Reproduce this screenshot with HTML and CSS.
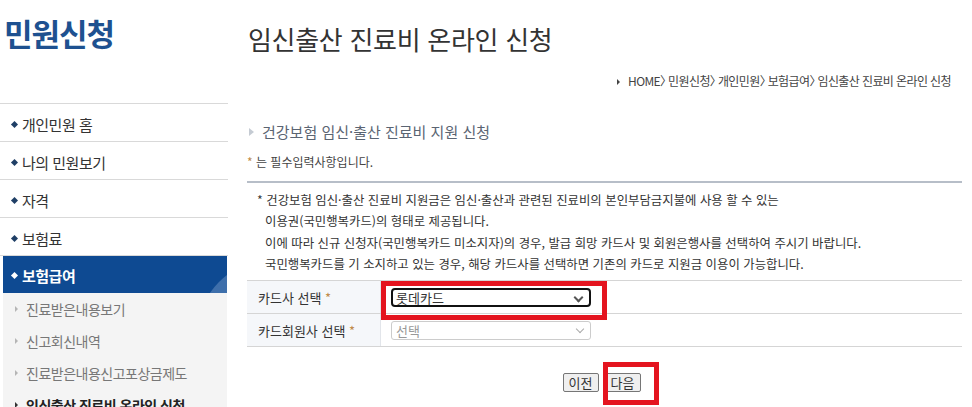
FILE: index.html
```html
<!DOCTYPE html>
<html lang="ko">
<head>
  <meta charset="UTF-8" />
  <title>임신출산 진료비 온라인 신청</title>
  <link rel="stylesheet" href="styles.css">
</head>
<body>
  <div class="page">
    <!-- 왼쪽 메뉴 -->
    <div class="sidebar">
      <h1 class="side-title">민원신청</h1>
      <ul class="side-menu">
        <li><span class="dia"></span>개인민원 홈</li>
        <li><span class="dia"></span>나의 민원보기</li>
        <li><span class="dia"></span>자격</li>
        <li><span class="dia"></span>보험료</li>
        <li class="active"><span class="dia"></span>보험급여</li>
      </ul>
      <ul class="sub-menu">
        <li><span class="tri"></span>진료받은내용보기</li>
        <li><span class="tri"></span>신고회신내역</li>
        <li><span class="tri"></span>진료받은내용신고포상금제도</li>
        <li class="on"><span class="tri"></span>임신출산 진료비 온라인 신청</li>
      </ul>
    </div>

    <!-- 본문 -->
    <div class="main">
      <h2 class="page-title">임신출산 진료비 온라인 신청</h2>
      <div class="location">
        <span class="loc-tri"></span>HOME<span class="gt">〉</span>민원신청<span class="gt">〉</span>개인민원<span class="gt">〉</span>보험급여<span class="gt">〉</span>임신출산 진료비 온라인 신청
      </div>

      <h3 class="sec-title"><span class="sec-tri"></span>건강보험 임신·출산 진료비 지원 신청</h3>
      <p class="req-note"><span class="star">*</span> 는 필수입력사항입니다.</p>

      <div class="notice">
        <p>* 건강보험 임신·출산 진료비 지원금은 임신·출산과 관련된 진료비의 본인부담금지불에 사용 할 수 있는</p>
        <p class="indent">이용권(국민행복카드)의 형태로 제공됩니다.</p>
        <p class="indent">이에 따라 신규 신청자(국민행복카드 미소지자)의 경우, 발급 희망 카드사 및 회원은행사를 선택하여 주시기 바랍니다.</p>
        <p class="indent">국민행복카드를 기 소지하고 있는 경우, 해당 카드사를 선택하면 기존의 카드로 지원금 이용이 가능합니다.</p>
      </div>

      <table class="form-table">
        <tr>
          <th>카드사 선택 <span class="star">*</span></th>
          <td class="mark-cell">
            <div class="fake-select focus">롯데카드<span class="chev"></span></div>
            <div class="red-box box-card"></div>
          </td>
        </tr>
        <tr>
          <th>카드회원사 선택 <span class="star">*</span></th>
          <td>
            <div class="fake-select disabled">선택<span class="chev"></span></div>
          </td>
        </tr>
      </table>

      <div class="btn-area">
        <button class="btn">이전</button>
        <span class="next-wrap">
          <button class="btn">다음</button>
          <span class="red-box box-next"></span>
        </span>
      </div>
    </div>
  </div>
</body>
</html>
```

FILE: styles.css
```css
/* 기본 */
body {
  margin: 0;
  font-family: "Noto Sans CJK KR", "Noto Sans", sans-serif;
  color: #333;
  background: #fff;
  overflow: hidden;
}

ul, p, h1, h2, h3 {
  margin: 0;
  padding: 0;
}

ul { list-style: none; }

.page {
  display: flex;
  height: 407px;
}

/* SIDEBAR */
.sidebar {
  width: 228px;
  flex: none;
}

.side-title {
  height: 104px;
  padding: 11px 0 0 4px;
  box-sizing: border-box;
  border-bottom: 1px solid #d9d9d9;
  font-size: 31px;
  line-height: 44px;
  font-weight: 700;
  color: #1e5190;
  letter-spacing: -1px;
}

.side-menu li {
  height: 37px;
  box-sizing: border-box;
  padding-top: 3px;
  border-bottom: 1px solid #d9d9d9;
  display: flex;
  align-items: center;
  padding-left: 12px;
  font-size: 15px;
  color: #333;
  letter-spacing: -0.5px;
}

.side-menu li:not(.active) {
  height: 38px;
}

.side-menu .dia {
  width: 5px;
  height: 5px;
  background: #1f3f66;
  transform: rotate(45deg);
  margin-right: 5px;
}

.side-menu li.active {
  position: relative;
  height: 37px;
  margin: 0 1px 0 3px;
  padding-left: 9px;
  padding-top: 1px;
  border-bottom: none;
  background: #0e4a92;
  color: #fff;
  font-weight: 700;
  overflow: hidden;
}

.side-menu li.active .dia {
  background: #fff;
}

/* 오른쪽 곡선 장식 */
.side-menu li.active::after {
  content: "";
  position: absolute;
  right: -120px;
  top: 4px;
  width: 150px;
  height: 150px;
  border-radius: 50%;
  background: #3e6fab;
}

.sub-menu {
  margin: 0 1px 0 3px;
  background: #f4f4f4;
  height: 120px;
}

.sub-menu li {
  height: 32px;
  display: flex;
  align-items: center;
  padding-left: 12px;
  font-size: 14px;
  color: #777;
  letter-spacing: -0.5px;
}

.sub-menu .tri {
  width: 0;
  height: 0;
  border-left: 3px solid #b5b5b5;
  border-top: 3px solid transparent;
  border-bottom: 3px solid transparent;
  margin-right: 8px;
}

.sub-menu li.on {
  color: #222;
  font-weight: 700;
}

.sub-menu li.on .tri {
  border-left-color: #333;
}

/* MAIN */
.main {
  flex: 1;
  padding: 0 10px 0 19px;
}

.page-title {
  font-size: 26px;
  font-weight: 400;
  color: #333;
  line-height: 36px;
  padding: 21px 0 0 1px;
  letter-spacing: -0.3px;
}

.location {
  text-align: right;
  font-size: 12px;
  color: #444;
  letter-spacing: -0.6px;
  margin-top: 16px;
  padding-right: 11px;
  line-height: 16px;
}

.location .gt {
  margin-right: 2px;
  letter-spacing: -6px;
}

.loc-tri {
  display: inline-block;
  width: 0;
  height: 0;
  border-left: 3px solid #444;
  border-top: 3px solid transparent;
  border-bottom: 3px solid transparent;
  margin-right: 8px;
  vertical-align: 1px;
}

.sec-title {
  margin-top: 33px;
  font-size: 15px;
  font-weight: 400;
  color: #5a6472;
  line-height: 20px;
  padding-left: 2px;
  display: flex;
  align-items: center;
}

.sec-tri {
  width: 0;
  height: 0;
  border-left: 5px solid #c5cbd3;
  border-top: 4px solid transparent;
  border-bottom: 4px solid transparent;
  margin-right: 8px;
}

.req-note {
  margin-top: 12px;
  font-size: 12px;
  line-height: 16px;
  color: #444;
}

.star {
  color: #c08a4a;
}

.notice {
  margin-top: 11px;
  border-top: 2px solid #b7bec8;
  border-bottom: 1px solid #d5d5d5;
  padding: 7px 0 5px 10px;
  font-size: 12.4px;
  line-height: 21.3px;
  color: #333;
}

.notice .indent {
  padding-left: 8px;
}

/* FORM TABLE */
.form-table {
  width: 100%;
  border-collapse: collapse;
}

.form-table th,
.form-table td {
  height: 32px;
  border-bottom: 1px solid #d5d5d5;
  padding: 0;
}

.form-table th {
  width: 122px;
  background: #f5f7fa;
  text-align: left;
  padding-left: 11px;
  font-size: 13px;
  font-weight: 400;
  color: #333;
  border-right: 1px solid #e2e5ea;
}

.form-table td {
  padding-left: 10px;
}

.mark-cell {
  position: relative;
}

.fake-select {
  position: relative;
  width: 200px;
  height: 19px;
  box-sizing: border-box;
  border: 1px solid #ccc;
  border-radius: 3px;
  font-size: 13px;
  line-height: 17px;
  padding-left: 4px;
  color: #999;
}

.fake-select.focus {
  border: 2px solid #111;
  border-radius: 4px;
  color: #333;
  line-height: 15px;
  padding-left: 3px;
}

.chev {
  position: absolute;
  right: 7px;
  top: 4px;
  width: 5px;
  height: 5px;
  border-right: 2px solid #555;
  border-bottom: 2px solid #555;
  transform: rotate(45deg);
}

.fake-select.disabled .chev {
  border-color: #aaa;
  border-width: 1.5px;
}

.red-box {
  position: absolute;
  border: 5px solid #e4141f;
  box-sizing: border-box;
  pointer-events: none;
}

.box-card {
  left: 0;
  top: 0;
  width: 226px;
  height: 39px;
}

/* BUTTONS */
.btn-area {
  display: flex;
  justify-content: center;
  align-items: flex-start;
  gap: 6px;
  padding-top: 26px;
  padding-right: 6px;
}

.btn {
  display: block;
  height: 19px;
  width: 36px;
  padding: 0;
  font-family: "Noto Sans CJK KR", sans-serif;
  font-size: 13px;
  line-height: 15px;
  color: #333;
  background: #efefef;
  border: 1px solid #767676;
  border-radius: 2px;
}

.next-wrap {
  position: relative;
  display: flex;
}

.box-next {
  left: -2px;
  top: -11px;
  width: 56px;
  height: 43px;
}
```
